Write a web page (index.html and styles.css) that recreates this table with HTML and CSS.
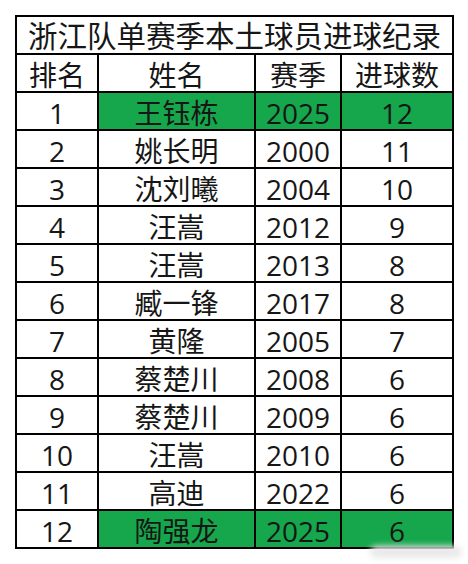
FILE: index.html
```html
<!DOCTYPE html>
<html lang="zh">
<head>
<meta charset="utf-8">
<link rel="stylesheet" href="styles.css">
</head>
<body>
<table class="record">
  <colgroup>
    <col class="c-rank"><col class="c-name"><col class="c-season"><col class="c-goals">
  </colgroup>
  <tr><td class="title" colspan="4">浙江队单赛季本土球员进球纪录</td></tr>
  <tr><td>排名</td><td>姓名</td><td>赛季</td><td>进球数</td></tr>
  <tr><td>1</td><td class="hl">王钰栋</td><td class="hl">2025</td><td class="hl">12</td></tr>
  <tr><td>2</td><td>姚长明</td><td>2000</td><td>11</td></tr>
  <tr><td>3</td><td>沈刘曦</td><td>2004</td><td>10</td></tr>
  <tr><td>4</td><td>汪嵩</td><td>2012</td><td>9</td></tr>
  <tr><td>5</td><td>汪嵩</td><td>2013</td><td>8</td></tr>
  <tr><td>6</td><td>臧一锋</td><td>2017</td><td>8</td></tr>
  <tr><td>7</td><td>黄隆</td><td>2005</td><td>7</td></tr>
  <tr><td>8</td><td>蔡楚川</td><td>2008</td><td>6</td></tr>
  <tr><td>9</td><td>蔡楚川</td><td>2009</td><td>6</td></tr>
  <tr><td>10</td><td>汪嵩</td><td>2010</td><td>6</td></tr>
  <tr><td>11</td><td>高迪</td><td>2022</td><td>6</td></tr>
  <tr><td>12</td><td class="hl">陶强龙</td><td class="hl">2025</td><td class="hl">6</td></tr>
</table>
<div class="watermark"></div>
</body>
</html>
```
FILE: styles.css
```css
html, body {
  margin: 0;
  padding: 0;
  background: #ffffff;
}
body {
  padding: 15px 0 0 15px;
  font-family: "Open Sans", "Noto Sans CJK SC", sans-serif;
  color: #161616;
  position: relative;
  width: 468px;
  height: 564px;
  box-sizing: border-box;
  overflow: hidden;
}
.record {
  border-collapse: collapse;
  table-layout: fixed;
  width: 437px;
  border: 2px solid #000;
}
.c-rank { width: 82px; }
.c-name { width: 157px; }
.c-season { width: 86px; }
.c-goals { width: 112px; }
.record td {
  border: 2px solid #000;
  height: 33px;
  padding: 3px 0 0 0;
  text-align: center;
  vertical-align: middle;
  font-size: 28px;
  line-height: 30px;
  font-weight: 400;
  white-space: nowrap;
}
.record td.title {
  font-size: 29.5px;
  height: 35px;
  padding-top: 1px;
}
.record td.hl {
  background: #16a64b;
}
.watermark {
  position: absolute;
  left: 370px;
  top: 546px;
  width: 92px;
  height: 12px;
  background: #e9e9e9;
  filter: blur(3px);
  border-radius: 6px;
}
```
